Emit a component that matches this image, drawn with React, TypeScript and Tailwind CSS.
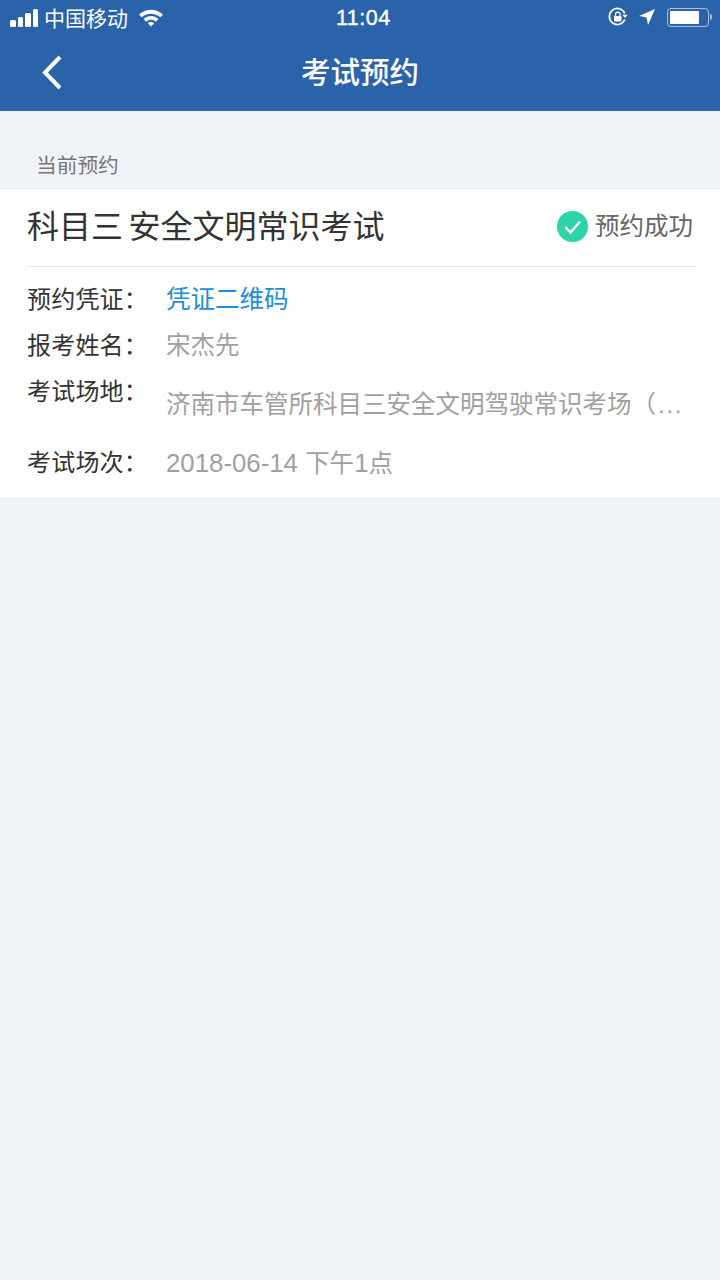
function Row({ label, children, className = "" }: { label: string; children: React.ReactNode; className?: string }) {
  return (
    <div className={"flex " + className}>
      <div className="w-[139px] shrink-0 text-[24px] leading-[36px] text-[#333333] font-normal tracking-[0.2px]">{label}</div>
      {children}
    </div>
  );
}

export default function App() {
  return (
    <div className={'w-[720px] h-[1280px] flex flex-col bg-[#f0f4f9] overflow-hidden font-["Liberation_Sans","Noto_Sans_CJK_SC",sans-serif]'}>
      <div className="h-[111px] shrink-0 bg-[#2a63a9] flex flex-col text-white">
        <div className="h-[37px] flex items-center pl-[10px] pr-[8px]">
          <div className="flex items-end gap-[2px] h-[18px] mt-[-2px]">
            <div className="w-[5.5px] h-[7px] bg-white rounded-[1.5px]" />
            <div className="w-[5.5px] h-[10px] bg-white rounded-[1.5px]" />
            <div className="w-[5.5px] h-[14px] bg-white rounded-[1.5px]" />
            <div className="w-[5.5px] h-[18px] bg-white rounded-[1.5px]" />
          </div>
          <span className="ml-[6px] text-[21px] leading-[37px] w-[84px] whitespace-nowrap">中国移动</span>
          <svg width="26" height="19" viewBox="0 0 26 19" className="ml-[10px] mt-[-3px]">
            <path d="M1 6.5 C8 0 18 0 25 6.5 L22.3 9.3 C16.8 4.4 9.2 4.4 3.7 9.3 Z" fill="#fff" />
            <path d="M5.5 11 C10 7 16 7 20.5 11 L17.8 13.7 C15 11.2 11 11.2 8.2 13.7 Z" fill="#fff" />
            <path d="M9.8 15.2 C11.8 13.6 14.2 13.6 16.2 15.2 L13 18.5 Z" fill="#fff" />
          </svg>
          <div className="ml-[172px] w-[54px] whitespace-nowrap text-[21.5px] leading-[37px] tracking-[0.5px] [-webkit-text-stroke:0.4px_white]">11:04</div>
          <div className="flex-1" />
          <svg width="20" height="20" viewBox="0 0 20 20" className="mt-[-3px]">
            <path d="M16.8 12.5 A8 8 0 1 1 16.8 6.5" fill="none" stroke="#fff" strokeWidth="1.7" />
            <path d="M14.3 7.8 L19.6 7.8 L17 11 Z" fill="#fff" />
            <rect x="6" y="9" width="7.5" height="5.5" rx="0.8" fill="#fff" />
            <path d="M7.5 9 V7.4 A2.2 2.2 0 0 1 12 7.4 V9" fill="none" stroke="#fff" strokeWidth="1.2" />
          </svg>
          <svg width="18" height="18" viewBox="0 0 18 18" className="ml-[10px] mt-[-3px]">
            <path d="M17 1 L10 17 L8.6 9.4 L1 8 Z" fill="#fff" />
          </svg>
          <div className="ml-[11px] mt-[-3px] flex items-center">
            <div className="w-[42px] h-[19px] rounded-[4px] border border-[#a9c1de] p-[2px]">
              <div className="w-[29px] h-full bg-white rounded-[1px]" />
            </div>
            <div className="w-[2px] h-[6px] bg-[#a9c1de] rounded-r-[2px] ml-[1px]" />
          </div>
        </div>
        <div className="relative flex-1 flex items-center justify-center">
          <svg width="24" height="38" viewBox="0 0 24 38" className="absolute left-[40px] top-[17px]">
            <path d="M20 3 L5 18.5 L20 34" fill="none" stroke="#fff" strokeWidth="4" />
          </svg>
          <span className="text-[29.5px] leading-[40px] font-medium mt-[-2px]">考试预约</span>
        </div>
      </div>

      <div className="h-[78px] shrink-0 flex items-end pl-[36px] pb-[7px] border-b border-[#e6eaef]">
        <span className="text-[20.7px] leading-[30px] text-[#777777]">当前预约</span>
      </div>

      <div className="bg-white border-b border-[#e6eaef] pl-[27px] pr-[25px]">
        <div className="h-[78px] flex items-center justify-between border-b border-[#e8e8e8]">
          <span className="text-[32px] leading-[44px] text-[#333333] mt-[-1px] whitespace-pre [word-spacing:-3.5px]">科目三 安全文明常识考试</span>
          <div className="flex items-center gap-[7px] mr-[2px] mt-[-1px]">
            <svg width="31" height="31" viewBox="0 0 31 31" className="mt-[-2px]">
              <circle cx="15.5" cy="15.5" r="15.5" fill="#2dd4a8" />
              <path d="M8.5 16 L13.5 21.5 L23 10.5" fill="none" stroke="#fff" strokeWidth="2.4" />
            </svg>
            <span className="text-[24.5px] leading-[36px] text-[#666666]">预约成功</span>
          </div>
        </div>
        <Row label="预约凭证：" className="mt-[15px]">
          <span className="text-[24.5px] leading-[36px] text-[#1a8fdc]">凭证二维码</span>
        </Row>
        <Row label="报考姓名：" className="mt-[10px]">
          <span className="text-[24.5px] leading-[36px] text-[#a0a0a0]">宋杰先</span>
        </Row>
        <Row label="考试场地：" className="mt-[10px]">
          <span className="mt-[13px] whitespace-nowrap text-[24.5px] leading-[36px] text-[#a0a0a0]">济南市车管所科目三安全文明驾驶常识考场（<span className="ml-[2px] tracking-[1.6px]">...</span></span>
        </Row>
        <Row label="考试场次：" className="mt-[22px] pb-[16px]">
          <span className="text-[24.5px] leading-[36px] text-[#a0a0a0] whitespace-pre"><span className="text-[25.8px]">2018-06-14 </span>下午<span className="text-[25.8px]">1</span>点</span>
        </Row>
      </div>
    </div>
  );
}
